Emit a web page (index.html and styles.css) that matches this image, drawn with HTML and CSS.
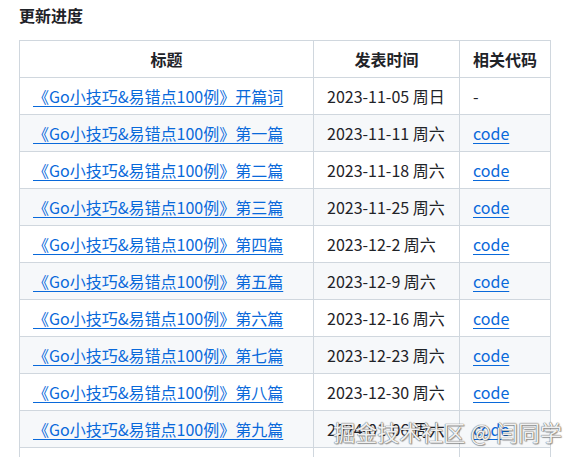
FILE: index.html
```html
<!DOCTYPE html>
<html lang="zh-CN">
<head>
<meta charset="utf-8">
<link rel="stylesheet" href="styles.css">
</head>
<body>
<div class="page">
  <div class="heading">更新进度</div>
  <table class="progress">
    <colgroup>
      <col class="c-title"><col class="c-date"><col class="c-code">
    </colgroup>
    <thead>
      <tr><th>标题</th><th>发表时间</th><th>相关代码</th></tr>
    </thead>
    <tbody>
      <tr><td><a href="#">《Go小技巧&amp;易错点100例》开篇词</a></td><td>2023-11-05 周日</td><td>-</td></tr>
      <tr><td><a href="#">《Go小技巧&amp;易错点100例》第一篇</a></td><td>2023-11-11 周六</td><td><a href="#">code</a></td></tr>
      <tr><td><a href="#">《Go小技巧&amp;易错点100例》第二篇</a></td><td>2023-11-18 周六</td><td><a href="#">code</a></td></tr>
      <tr><td><a href="#">《Go小技巧&amp;易错点100例》第三篇</a></td><td>2023-11-25 周六</td><td><a href="#">code</a></td></tr>
      <tr><td><a href="#">《Go小技巧&amp;易错点100例》第四篇</a></td><td>2023-12-2 周六</td><td><a href="#">code</a></td></tr>
      <tr><td><a href="#">《Go小技巧&amp;易错点100例》第五篇</a></td><td>2023-12-9 周六</td><td><a href="#">code</a></td></tr>
      <tr><td><a href="#">《Go小技巧&amp;易错点100例》第六篇</a></td><td>2023-12-16 周六</td><td><a href="#">code</a></td></tr>
      <tr><td><a href="#">《Go小技巧&amp;易错点100例》第七篇</a></td><td>2023-12-23 周六</td><td><a href="#">code</a></td></tr>
      <tr><td><a href="#">《Go小技巧&amp;易错点100例》第八篇</a></td><td>2023-12-30 周六</td><td><a href="#">code</a></td></tr>
      <tr><td><a href="#">《Go小技巧&amp;易错点100例》第九篇</a></td><td>2024-01-06 周六</td><td><a href="#">code</a></td></tr>
      <tr><td>&nbsp;</td><td>&nbsp;</td><td>&nbsp;</td></tr>
    </tbody>
  </table>
</div>
<div class="watermark">掘金技术社区 @ 闫同学</div>
</body>
</html>
```
FILE: styles.css
```css
html, body {
  margin: 0;
  padding: 0;
  background: #ffffff;
  overflow: hidden;
}
body {
  font-family: "Noto Sans CJK SC", "Noto Sans", sans-serif;
  color: #1f2328;
  font-size: 16px;
}
.page {
  padding: 3px 19px 0;
}
.heading {
  font-weight: 700;
  font-size: 16px;
  line-height: 24px;
  margin-bottom: 13px;
}
.progress {
  border-collapse: collapse;
  table-layout: fixed;
  width: 531px;
}
.c-title { width: 294px; }
.c-date { width: 146px; }
.c-code { width: 91px; }
.progress th,
.progress td {
  border: 1px solid #d0d7de;
  padding: 6px 13px;
  line-height: 24px;
  white-space: nowrap;
  text-align: left;
}
.progress th {
  font-weight: 700;
  text-align: center;
}
.progress tbody tr:nth-child(even) {
  background: #f6f8fa;
}
.progress a {
  color: #0969da;
  text-decoration: underline;
  text-underline-offset: 3px;
}
.watermark {
  position: absolute;
  right: 14px;
  bottom: 12px;
  font-family: "Noto Sans CJK SC", sans-serif;
  font-size: 22px;
  line-height: 28px;
  color: rgba(255, 255, 255, 0.92);
  text-shadow: 0 0 1px #666, 0 0 1px #666, 1px 1px 1px rgba(0,0,0,0.35);
  letter-spacing: 0;
}
```
